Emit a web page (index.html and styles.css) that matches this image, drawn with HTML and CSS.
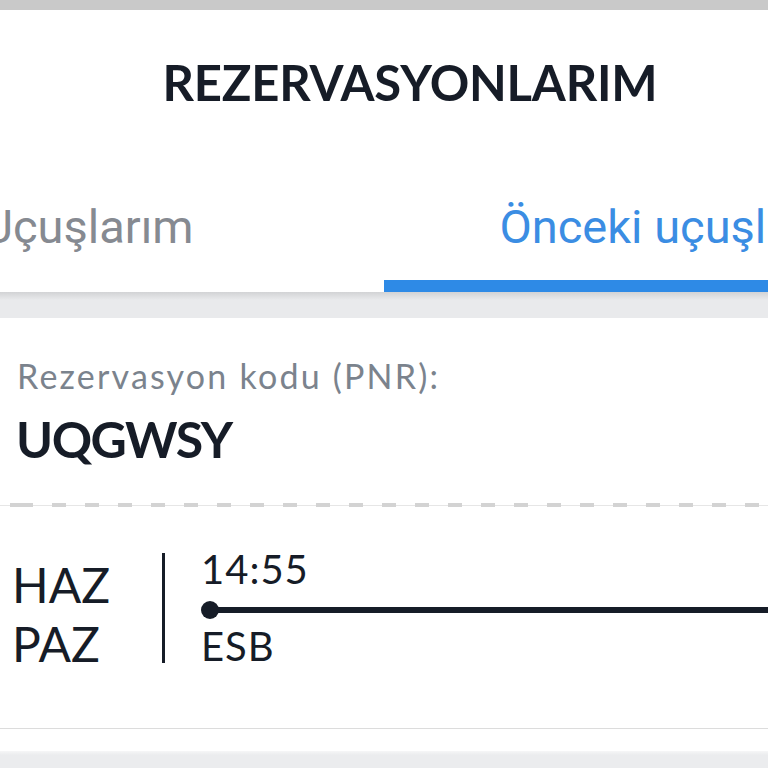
FILE: index.html
```html
<!DOCTYPE html>
<html lang="tr">
<head>
    <meta charset="UTF-8">
    <meta name="viewport" content="width=device-width, initial-scale=1.0">
    <title>Rezervasyonlarım</title>
    <link rel="stylesheet" href="styles.css">
</head>
<body>

<div class="screen">
    <div class="top-strip"></div>

    <!-- Header with title and tabs -->
    <div class="header">
        <h1 class="title">REZERVASYONLARIM</h1>
        <div class="tabs">
            <div class="tab">Uçuşlarım</div>
            <div class="tab active">Önceki uçuşlarım</div>
        </div>
    </div>

    <div class="gap"></div>

    <!-- Booking card -->
    <div class="card">
        <div class="pnr-label">Rezervasyon kodu (PNR):</div>
        <div class="pnr-code">UQGWSY</div>
        <div class="dashed"></div>

        <div class="flight">
            <div class="flight-date">
                <div>HAZ</div>
                <div>PAZ</div>
            </div>
            <div class="flight-route">
                <div class="time">14:55</div>
                <div class="track"><span class="dot"></span><span class="line"></span></div>
                <div class="airport">ESB</div>
            </div>
        </div>
    </div>
    <div class="card-foot"></div>
    <div class="gap bottom"></div>
</div>

</body>
</html>
```

FILE: styles.css
```css
body {
    margin: 0;
    font-family: "Lato", "Open Sans", sans-serif;
    color: #161c27;
    background-color: #e9eaec;
}
.screen {
    width: 768px;
    height: 768px;
    overflow: hidden;
    background-color: #e9eaec;
}
.top-strip {
    height: 10px;
    background-color: #c9c9c9;
}
.header {
    background-color: #fff;
    padding-top: 42px;
}
.title {
    margin: 0;
    padding-left: 52px;
    text-align: center;
    font-size: 49px;
    line-height: 60px;
    font-weight: 700;
    letter-spacing: -0.2px;
}
.tabs {
    display: flex;
    margin-left: -208px;
    margin-top: 87px;
}
.tab {
    flex: 0 0 592px;
    text-align: center;
    font-family: "Roboto", sans-serif;
    font-size: 47px;
    line-height: 56px;
    color: #868a91;
    padding-bottom: 25px;
    border-bottom: 12px solid transparent;
}
.tab.active {
    color: #3b8de3;
    border-bottom-color: #2e8ae6;
}
.gap {
    height: 26px;
    background: linear-gradient(#d2d3d5, #e9eaec 8px);
}
.card {
    background-color: #fff;
    padding-top: 38px;
    border-bottom: 1px solid #dcdcdc;
}
.pnr-label {
    padding-left: 17px;
    font-size: 34px;
    line-height: 40px;
    letter-spacing: 2.2px;
    color: #7b838d;
}
.pnr-code {
    margin-top: 13px;
    padding-left: 16px;
    font-size: 50px;
    line-height: 60px;
    font-weight: 700;
    letter-spacing: -1.5px;
}
.dashed {
    margin-top: 34px;
    height: 4px;
    background:
        repeating-linear-gradient(90deg, #d3d3d3 0 14px, transparent 14px 33px) 19px 0,
        linear-gradient(#e6e6e6, #e6e6e6) 0 50% / 100% 1px no-repeat;
}
.flight {
    display: flex;
    align-items: flex-start;
    padding-top: 46px;
    padding-bottom: 55px;
}
.flight-date {
    width: 150px;
    padding-left: 12px;
    margin-top: 2px;
    font-size: 48px;
    line-height: 59px;
}
.flight-route {
    flex: 1;
    border-left: 3px solid #161c27;
    padding-left: 36px;
    font-size: 40px;
    line-height: 33px;
    letter-spacing: 1px;
}
.track {
    display: flex;
    align-items: center;
    height: 18px;
    margin-top: 15px;
    margin-bottom: 11px;
}
.dot {
    width: 18px;
    height: 18px;
    border-radius: 50%;
    background-color: #161c27;
}
.line {
    flex: 1;
    height: 6px;
    margin-left: -2px;
    background-color: #161c27;
}
.card-foot {
    height: 22px;
    background-color: #fff;
}
.gap.bottom {
    background: linear-gradient(#f6f6f7, #ebecee 4px);
}
```
